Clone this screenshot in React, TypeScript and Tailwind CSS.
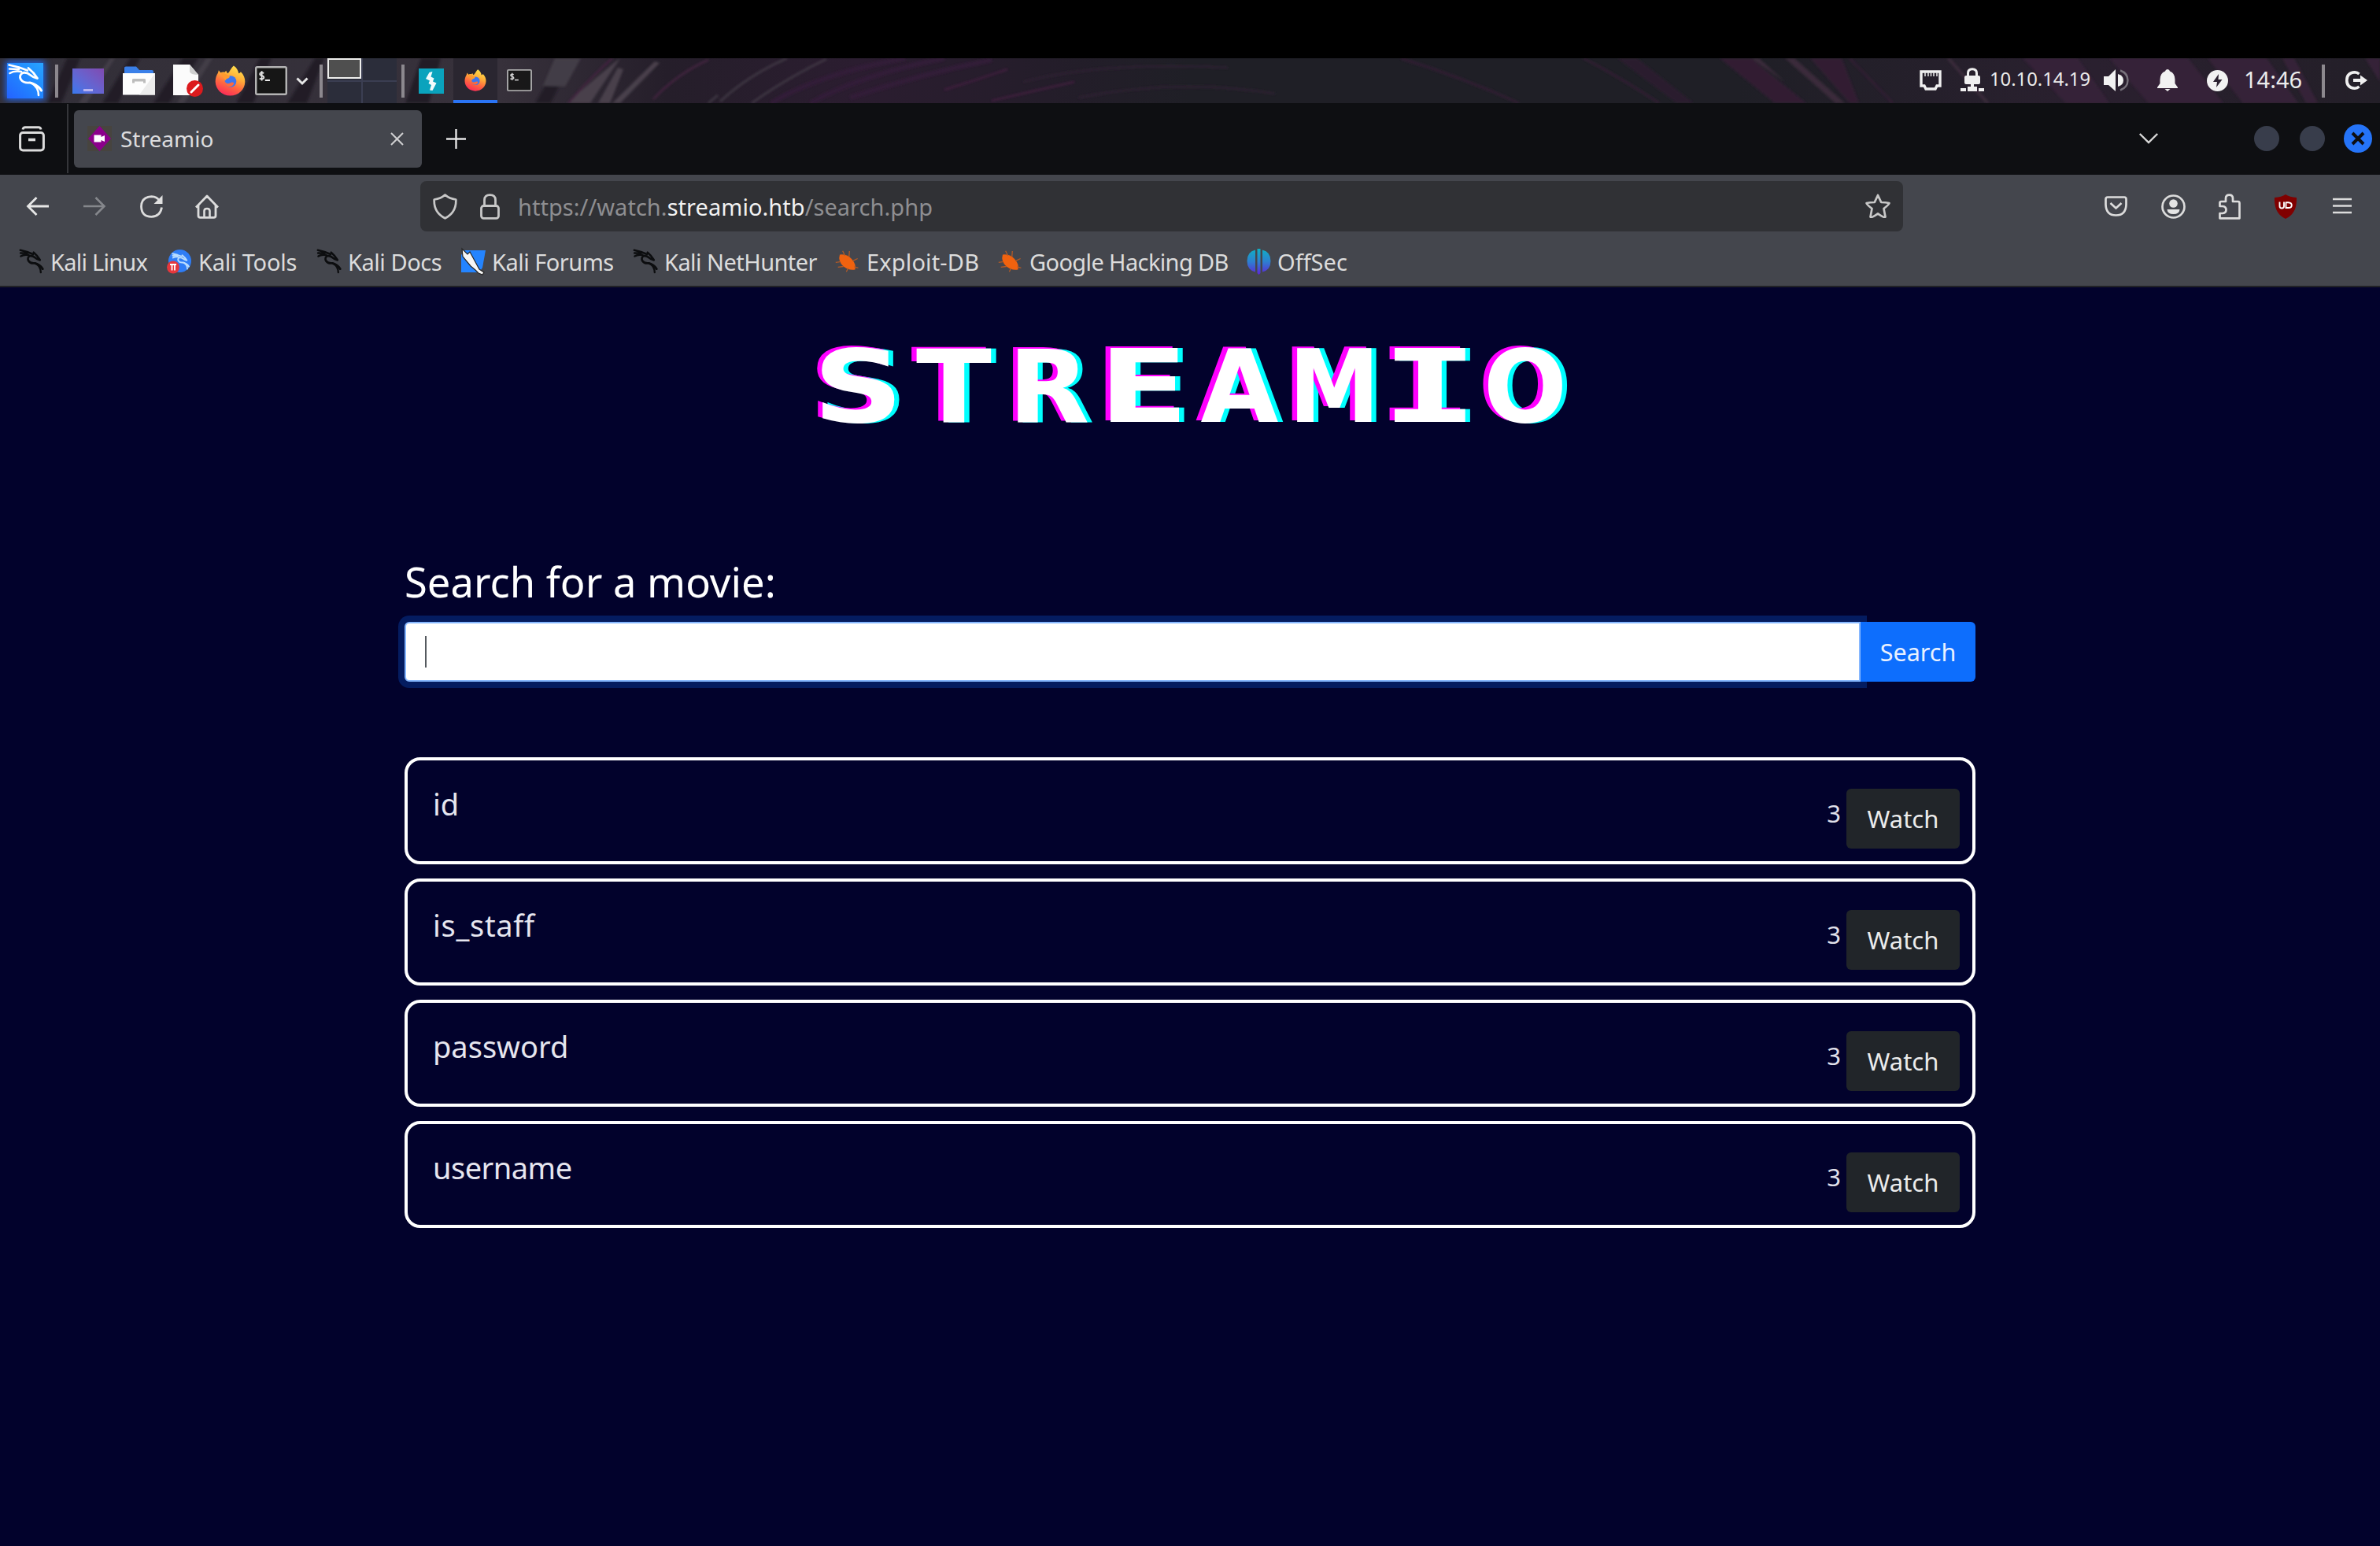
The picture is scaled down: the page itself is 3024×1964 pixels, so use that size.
import React from "react";

type SvgProps = { w: number; h: number; className?: string; children: React.ReactNode; vb?: string };

function Svg({ w, h, vb, className = "", children }: SvgProps) {
  return (
    <svg
      width={w}
      height={h}
      viewBox={vb ?? `0 0 ${w} ${h}`}
      fill="none"
      className={`block shrink-0 overflow-visible ${className}`}
      aria-hidden="true"
      preserveAspectRatio="none"
    >
      {children}
    </svg>
  );
}

function DragonStrokes({ color, width = 2.6 }: { color: string; width?: number }) {
  return (
    <g stroke={color} strokeWidth={width} strokeLinecap="round" strokeLinejoin="round" fill="none">
      <path d="M2.5 2.5 L15 5.5 L26 9.5 M3 7.5 L15 8 M3.5 13 Q9 9.5 18 11" />
      <path d="M27 6.5 Q34 12 38.5 19.5 Q33 18.5 29 15 Q25 11.5 20 12.5 Q14.5 15.5 17.5 21 Q21 26 29 25 Q38 27 43.5 35" strokeWidth={width * 1.1} />
      <path d="M31 25.5 Q40 31 40 41 M36 28 Q42 31 43.5 35" />
    </g>
  );
}

function Firefox({ size, id }: { size: number; id: string }) {
  return (
    <Svg w={size} h={size} vb="0 0 40 40">
      <defs>
        <linearGradient id={id} x1="30" y1="2" x2="14" y2="40" gradientUnits="userSpaceOnUse">
          <stop offset="0" stopColor="#ffe14d" />
          <stop offset="0.35" stopColor="#ffae38" />
          <stop offset="0.65" stopColor="#ff6640" />
          <stop offset="1" stopColor="#fb2859" />
        </linearGradient>
      </defs>
      <path
        d="M24.5 0.5 C28.5 3 30.5 7 31 10.5 C33 10 33.8 8.4 33.8 8.4 C37.5 12 39.5 16.5 39.3 21.5 C39 32 30.5 39.5 20 39.5 C9.5 39.5 1 31.5 0.7 21.5 C0.6 17 2 13 4 10 L5 6.5 L7.5 9.5 C9 8.5 11 8.5 13 9 L14.5 7 L16.5 10.5 C19.5 9 20 4.5 24.5 0.5Z"
        fill={`url(#${id})`}
      />
      <circle cx="20.5" cy="21" r="7.5" fill="#3d76ee" />
      <path d="M8 10 C13 10 16 12 19.5 14.5 C18.5 17.8 14 16.5 14 20 C12.5 17 9 15 8 10Z" fill="#ff9a2e" />
      <path d="M13 20 C14 25 18.5 24 21 22.5 C23.5 21 25.5 23 24.5 24.5 C20 31 12 27 13 20Z" fill="#ff6a3c" />
    </Svg>
  );
}

function Terminal({ w, h }: { w: number; h: number }) {
  return (
    <Svg w={w} h={h} vb="0 0 40 36">
      <rect x="1.2" y="1.2" width="37.6" height="33.6" rx="1.5" fill="#161616" stroke="#b4b4b4" strokeWidth="2.4" />
      <path d="M11 8.5 Q6 7.3 6 9.8 Q6 11.3 8.5 11.8 Q11 12.5 11 14 Q11 16.5 5.5 15.4 M8.4 6 V18" stroke="#e8e8e8" strokeWidth="1.8" />
      <path d="M12.5 17.5 H18.5" stroke="#e8e8e8" strokeWidth="2" />
    </Svg>
  );
}

function Wallpaper() {
  return (
    <svg className="absolute inset-0 size-full" viewBox="0 0 3024 57" preserveAspectRatio="none" aria-hidden="true">
      <defs>
        <linearGradient id="wall" x1="0" x2="1">
          <stop offset="0" stopColor="#322f38" />
          <stop offset="0.21" stopColor="#37313b" />
          <stop offset="0.28" stopColor="#251e2a" />
          <stop offset="0.36" stopColor="#2b1d30" />
          <stop offset="0.44" stopColor="#241d2a" />
          <stop offset="0.5" stopColor="#1f1f26" />
          <stop offset="0.73" stopColor="#1f1f26" />
          <stop offset="0.88" stopColor="#2a202f" />
          <stop offset="1" stopColor="#231f28" />
        </linearGradient>
        <filter id="soft" x="-5%" y="-20%" width="110%" height="140%">
          <feGaussianBlur stdDeviation="1.5" />
        </filter>
      </defs>
      <rect width="3024" height="57" fill="url(#wall)" />
      <g filter="url(#soft)">
        <g fill="#211f28">
          <path d="M60 57 L85 0 H102 L78 57Z M130 57 L165 0 H178 L150 57Z M195 57 L232 0 H252 L215 57Z M300 57 L330 0 H345 L322 57Z M365 57 L400 0 H412 L390 57Z M515 57 L535 0 H560 L545 57Z M680 57 L712 0 H728 L700 57Z" />
        </g>
        <g fill="#433d47">
          <path d="M100 57 L140 0 H146 L110 57Z M225 57 L262 0 H270 L234 57Z M690 35 L705 0 H738 L718 36Z" />
          <path d="M720 57 L780 6 L788 0 L750 57Z M760 57 L785 12 L792 14 L775 57Z M778 57 L832 4 L838 6 L788 57Z" fill="#49414c" />
        </g>
        <g stroke="#3a1f39" strokeWidth="2.5" fill="none">
          <path d="M722 57 Q750 25 778 0 M830 52 Q860 20 900 2" stroke="#43233f" />
          <path d="M980 57 Q1040 20 1150 0 M1030 57 Q1090 22 1200 0 M1080 50 Q1170 20 1260 2" stroke="#331c37" strokeWidth="6" />
          <path d="M1200 40 Q1240 28 1280 14 M1260 54 Q1320 40 1365 30" stroke="#401f3e" />
          <path d="M1300 30 Q1400 4 1560 12 M1370 50 Q1500 25 1620 45" stroke="#2d2032" />
        </g>
        <g stroke="#3f3844" strokeWidth="2.5" fill="none">
          <path d="M915 55 Q950 22 1000 0 M955 57 Q1000 25 1050 1 M900 57 L912 47" />
        </g>
        <g stroke="#301f33" strokeWidth="3" fill="none">
          <path d="M1780 0 Q1860 25 1930 57 M2012 0 Q2060 25 2108 57 M2350 0 L2405 57" />
        </g>
        <g fill="#291f2e">
          <path d="M2055 0 H2080 L2152 57 H2130Z" />
          <path d="M2185 0 H2225 L2295 57 H2255Z M2300 0 H2340 L2362 57 H2350Z" fill="#301f33" />
          <path d="M2570 0 H2640 L2680 57 H2625Z M2680 0 H2780 L2825 57 H2730Z M2805 0 H2880 L2920 57 H2850Z M2900 0 H2915 L2945 57 H2930Z M3005 0 H3024 V30Z" fill="#362037" />
        </g>
        <g fill="#3a2b3a">
          <path d="M2225 0 H2235 L2268 30Z M2268 0 H2280 L2344 57 H2332Z M2473 0 H2478 L2528 57 H2523Z" />
        </g>
      </g>
    </svg>
  );
}

function Sep() {
  return <div className="h-[42px] w-1 shrink-0 bg-[#8c888e]" />;
}

function Panel() {
  return (
    <div className="relative h-[57px] w-full overflow-hidden bg-[#1f1f26]">
      <Wallpaper />
      <div className="relative flex h-[57px] items-center">
        <div className="ml-[9px] flex h-[45px] w-[46px] items-center justify-center bg-linear-to-tr from-[#2562ff] to-[#28a4ff] shadow-[0_0_8px_2px_#2065e8]">
          <Svg w={46} h={45} vb="0 0 46 45">
            <DragonStrokes color="#ffffff" />
          </Svg>
        </div>
        <div className="ml-[15px]"><Sep /></div>
        <div className="ml-[18px] flex h-8 w-10 items-end justify-center bg-linear-to-tr from-[#3579ee] to-[#8049b0] pb-[3px]">
          <div className="h-[3px] w-3 bg-[#b9b3ef]" />
        </div>
        <Svg w={41} h={37} className="ml-6">
          <path d="M2 2 Q2 0.5 4 0.5 H17 L21 5 H37 Q39 5 39 7 V12 H2Z" fill="#3a7fe8" />
          <path d="M0 9 H41 V36.5 H0Z" fill="#fdfdfd" />
          <path d="M41 9 V36.5 H21Z" fill="#ececec" />
          <path d="M12 21.5 V17 Q12 16 14 16 H27 Q29 16 29 17 V21.5 H26 V19.5 H15 V21.5Z" fill="#bdbdbd" />
        </Svg>
        <Svg w={38} h={41} className="ml-[23px]">
          <path d="M0 0 H21 L32 13 V39 H0Z" fill="#fbfbfb" />
          <path d="M21 0 V9 Q22 13 32 13Z" fill="#cfcfcf" />
          <circle cx="27.5" cy="30.5" r="10.5" fill="#dc1a1d" />
          <path d="M23 35 L32 26" stroke="#fff" strokeWidth="3" strokeLinecap="round" />
        </Svg>
        <div className="ml-[15px]"><Firefox size={39} id="ff-launch" /></div>
        <div className="ml-3"><Terminal w={41} h={37} /></div>
        <Svg w={16} h={10} className="ml-[11px]">
          <path d="M1.5 1.5 L8 8 L14.5 1.5" stroke="#e6e6e6" strokeWidth="3" />
        </Svg>
        <div className="ml-[14px]"><Sep /></div>
        <div className="ml-[6px] grid h-[57px] w-[88px] grid-cols-2 grid-rows-2 gap-[2px] bg-[#3b3e52]">
          <div className="bg-[#2b2d3a]">
            <div className="h-[26px] border-2 border-[#eeeeec] bg-[#4f4f4f]" />
          </div>
          <div className="bg-[#2b2d3a]" />
          <div className="bg-[#2b2d3a]" />
          <div className="bg-[#2b2d3a]" />
        </div>
        <div className="ml-[6px]"><Sep /></div>
        <Svg w={32} h={32} className="ml-[18px]">
          <rect width="32" height="32" fill="#0aa3bd" />
          <path d="M17.5 4 L13.5 5 L9 13 L14 15.5 L12.5 19 L16 21 L14 27.5 L17.5 28 L22.5 18.5 L18 16.5 L19.5 12.5 L15.5 10.5Z" fill="#f2fbfc" />
        </Svg>
        <div className="ml-3 flex h-[57px] w-14 flex-col items-center border-b-4 border-[#2a74f5] bg-[#2a2630] pt-[14px]">
          <Firefox size={28} id="ff-task" />
        </div>
        <div className="-mt-[2px] ml-3 opacity-90"><Terminal w={32} h={28} /></div>

        <Svg w={28} h={26} className="-mt-[2px] ml-[1763px]">
          <path d="M2 2 H26 V20 H22 L20 24 H8 L6 20 H2Z" stroke="#f0f0f0" strokeWidth="3.4" />
          <path d="M7 3 V8 M11 3 V8 M14.5 3 V8 M18 3 V8 M22 3 V8" stroke="#e0e0e0" strokeWidth="1.6" />
        </Svg>
        <Svg w={30} h={31} className="-mt-[2px] ml-6">
          <path d="M9.5 11 V7 Q9.5 1.8 15 1.8 Q20.5 1.8 20.5 7 V11" stroke="#f0f0f0" strokeWidth="3" />
          <path d="M7 10 H23 Q25 10 25 12 V19 Q25 21 23 21 H7 Q5 21 5 19 V12 Q5 10 7 10Z M13 21 H17 V24 H21 V30 H9 V24 H13Z M0 26 H7 V30 H0Z M23 26 H30 V30 H23Z" fill="#f0f0f0" />
        </Svg>
        <span className="-mt-[4px] ml-[7px] w-[130px] text-[23.8px] leading-none whitespace-nowrap text-[#ececec]">10.10.14.19</span>
        <Svg w={32} h={28} className="-mt-[2px] ml-[15px]">
          <path d="M0 9 H6 L15 0 V28 L6 20 H0Z" fill="#f2f2f2" />
          <path d="M18 6 Q25 8 25 14 Q25 20 18 22Z" fill="#f2f2f2" />
          <path d="M21 1.5 Q30.5 5 30.5 14 Q30.5 23 21 26.5" stroke="#77717b" strokeWidth="2.4" />
        </Svg>
        <Svg w={26} h={28} className="-mt-[2px] ml-9">
          <path d="M13 0 Q15.5 0 16 2.5 Q22.5 5 22.5 13 V18 L26 23 V24 H0 V23 L3.5 18 V13 Q3.5 5 10 2.5 Q10.5 0 13 0Z M9.5 25 H16.5 L13 28Z" fill="#f2f2f2" />
        </Svg>
        <Svg w={27} h={27} className="-mt-[1px] ml-[37px]">
          <circle cx="13.5" cy="13.5" r="13.5" fill="#f2f2f2" />
          <path d="M15 5 L8 15 H13 L12 22 L19.5 12 H14.5Z" fill="#2b2130" />
        </Svg>
        <span className="-mt-[4px] ml-[20px] w-[75px] text-[29px] leading-none whitespace-nowrap text-[#ececec]">14:46</span>
        <div className="ml-6"><Sep /></div>
        <Svg w={28} h={24} className="-mt-[1px] ml-[26px]">
          <path d="M17.5 4 Q15 1.8 12 1.8 Q1.8 2.5 1.8 12 Q1.8 21.5 12 22.2 Q15 22.2 17.5 20" stroke="#f0f0f0" strokeWidth="3.6" />
          <path d="M10 10 H19 V5.5 L28 12 L19 18.5 V14 H10Z" fill="#f0f0f0" />
        </Svg>
      </div>
    </div>
  );
}

function TabBar() {
  return (
    <div className="flex h-[91px] items-center bg-[#0e0f12] pb-px">
      <Svg w={33} h={33} className="mt-[1px] ml-6">
        <path d="M5 4.5 Q5.5 1.8 8 1.8 H25 Q27.5 1.8 28 4.5" stroke="#dcdcdc" strokeWidth="3" />
        <rect x="1.6" y="8.5" width="29.8" height="22.5" rx="3.5" stroke="#dcdcdc" strokeWidth="3" />
        <path d="M12 17.5 H21" stroke="#dcdcdc" strokeWidth="3.6" />
      </Svg>
      <div className="ml-7 h-[88px] w-[2px] bg-[#35363a]" />
      <div className="ml-[7px] flex h-[73px] w-[442px] items-center rounded-md bg-[#44464d]">
        <Svg w={31} h={32} className="ml-[17px]">
          <rect width="31" height="32" fill="#47443f" />
          <path d="M15.5 0 L30 16 L15.5 32 L1 16Z" fill="#8b008b" />
          <path d="M8.5 11.5 H17.5 V14 L22 12 V20 L17.5 18 V20.5 H8.5Z" fill="#fff" />
        </Svg>
        <span className="ml-[11px] w-[343px] text-[28px] leading-none whitespace-nowrap text-[#dcdcde]">Streamio</span>
        <Svg w={17} h={17}>
          <path d="M1 1 L16 16 M16 1 L1 16" stroke="#d0d0d2" strokeWidth="2" />
        </Svg>
      </div>
      <Svg w={25} h={25} className="ml-[31px]">
        <path d="M12.5 0 V25 M0 12.5 H25" stroke="#e4e4e4" strokeWidth="2.4" />
      </Svg>
      <Svg w={24} h={14} className="mr-[122px] ml-auto">
        <path d="M0.8 1 L12 12 L23.2 1" stroke="#d8d8d8" strokeWidth="2.4" />
      </Svg>
      <div className="mr-[26px] size-8 rounded-full bg-[#383d4b]" />
      <div className="mr-6 size-8 rounded-full bg-[#383d4b]" />
      <div className="mr-[10px] flex size-9 items-center justify-center rounded-full bg-[#2574f8]">
        <Svg w={16} h={16}>
          <path d="M1 1 L15 15 M15 1 L1 15" stroke="#0e0f12" strokeWidth="4" />
        </Svg>
      </div>
    </div>
  );
}

function NavBar() {
  return (
    <div className="flex h-[80px] items-center">
      <Svg w={28} h={24} className="ml-[34px]">
        <path d="M28 12 H1.5 M12.5 1 L1.5 12 L12.5 23" stroke="#e6e6e6" strokeWidth="2.8" />
      </Svg>
      <Svg w={28} h={24} className="ml-11">
        <path d="M0 12 H26.5 M15.5 1 L26.5 12 L15.5 23" stroke="#85878c" strokeWidth="2.6" />
      </Svg>
      <Svg w={29} h={29} className="ml-11">
        <path d="M25.5 8 Q21.5 1.6 14.5 1.6 Q1.5 2.5 1.5 14.5 Q2 27.4 14.5 27.4 Q25.5 27 27.5 15.5" stroke="#dcdcdc" strokeWidth="2.8" />
        <path d="M28.5 0 V11 H17.5Z" fill="#e0e0e0" />
      </Svg>
      <Svg w={30} h={31} className="ml-[41px]">
        <path d="M1 16.5 L15 2 L29 16.5 M4 14 V27 Q4 29.4 6.5 29.4 H23.5 Q26 29.4 26 27 V14" stroke="#dcdcdc" strokeWidth="2.8" strokeLinejoin="round" />
        <path d="M11.5 29 V21 Q11.5 18 15 18 Q18.5 18 18.5 21 V29" stroke="#dcdcdc" strokeWidth="2.6" />
      </Svg>
      <div className="ml-64 flex h-16 w-[1884px] items-center rounded-lg bg-[#303135]">
        <Svg w={31} h={33} className="ml-4">
          <path d="M15.5 1.6 Q21 6.5 29.3 7.5 Q30 24 15.5 31.3 Q1 24 1.7 7.5 Q10 6.5 15.5 1.6Z" stroke="#c8c8c8" strokeWidth="2.7" strokeLinejoin="round" />
        </Svg>
        <Svg w={25} h={33} className="ml-[29px]">
          <path d="M5.5 15 V8 Q5.5 1.6 12.5 1.6 Q19.5 1.6 19.5 8 V15" stroke="#c8c8c8" strokeWidth="2.8" />
          <rect x="1.5" y="15.5" width="22" height="15.8" rx="3" stroke="#c8c8c8" strokeWidth="2.8" />
        </Svg>
        <span className="ml-[23px] text-[29px] leading-none tracking-[0.04px] whitespace-nowrap text-[#8e8e91]">
          https://watch.<span className="text-[#f2f2f2]">streamio.htb</span>/search.php
        </span>
        <Svg w={32} h={32} className="mr-4 ml-auto">
          <path d="M16 2 L20.2 11 Q26 11.2 30.5 12 Q30.5 13.5 23.5 19 L25.5 29.5 Q24 31 16 25.3 Q8 31 6.5 29.5 L8.5 19 Q1.5 13.5 1.5 12 Q6 11.2 11.8 11Z" stroke="#c8c8c8" strokeWidth="2.7" strokeLinejoin="round" />
        </Svg>
      </div>
      <Svg w={29} h={26} className="ml-64">
        <path d="M4 1.5 H25 Q27.5 1.5 27.5 4 V11 Q27 24.5 14.5 24.5 Q2 24.5 1.5 11 V4 Q1.5 1.5 4 1.5Z" stroke="#dcdcdc" strokeWidth="2.7" />
        <path d="M7.5 9 L14.5 15.5 L21.5 9" stroke="#dcdcdc" strokeWidth="2.7" />
      </Svg>
      <Svg w={31} h={31} className="ml-[43px]">
        <circle cx="15.5" cy="15.5" r="14" stroke="#dcdcdc" strokeWidth="2.7" />
        <circle cx="15.5" cy="11.5" r="5.3" fill="#e4e4e4" />
        <path d="M7.5 19 H23.5 Q23 25 15.5 25 Q8 25 7.5 19Z" fill="#e4e4e4" />
      </Svg>
      <Svg w={28} h={33} className="ml-[42px]">
        <path d="M1.5 14 V11.5 Q1.5 10 3.5 10 H9 V6 Q9 1.6 13.5 1.6 Q18 1.6 18 6 V10 H24.5 Q26.5 10 26.5 12 V31.3 H1.5 V25 H5 Q9.5 24.5 9.5 20.5 Q9.5 16.5 5 16 H1.5Z" stroke="#dcdcdc" strokeWidth="2.7" strokeLinejoin="round" />
      </Svg>
      <Svg w={28} h={31} className="ml-[43px]">
        <path d="M14 0 Q19 3.5 28 4 Q29 24 14 31 Q-1 24 0 4 Q9 3.5 14 0Z" fill="#800000" />
        <path d="M6.5 9.5 V15 Q6.5 17.5 9.3 17.5 Q12 17.5 12 15 V9.5 M14.5 18 V9.5 M14.5 10.2 H17.5 Q21.8 10.5 21.8 13.7 Q21.8 17 17.5 17 H14.5" stroke="#fff" strokeWidth="1.9" />
      </Svg>
      <Svg w={24} h={22} className="ml-[46px]">
        <path d="M0 2 H24 M0 10.5 H24 M0 19 H24" stroke="#dcdcdc" strokeWidth="2.7" />
      </Svg>
    </div>
  );
}

function KaliDark() {
  return (
    <Svg w={32} h={33} vb="0 0 46 45">
      <DragonStrokes color="#0c0d0f" width={3.4} />
    </Svg>
  );
}

function KaliTools() {
  return (
    <Svg w={32} h={33}>
      <circle cx="16.5" cy="15.5" r="14.5" fill="#2f7df6" />
      <g transform="translate(6 5) scale(0.5)">
        <DragonStrokes color="#b9dcff" width={3.6} />
      </g>
      <circle cx="8" cy="23.5" r="8" fill="#e5373c" />
      <path d="M4 20 H12 M6.5 20 V27.5 M10 20 V27.5" stroke="#fff" strokeWidth="1.8" />
    </Svg>
  );
}

function KaliForums() {
  return (
    <Svg w={32} h={33}>
      <path d="M5 2 H32 L28 24 L24 30 H1 V8Z" fill="#2484ff" />
      <path d="M2 0 L9 7 L12 4 L18 15 L24 26 L30 30 L28 33 L23 31 L19 27 L13 22 L3 10Z" fill="#f6f6f6" stroke="#262626" strokeWidth="1.2" />
    </Svg>
  );
}

function ExploitBug() {
  return (
    <Svg w={32} h={33}>
      <g transform="rotate(38 15 17)">
        <path d="M2 15 Q8 9 17 10 Q27 12 29 18 Q24 24 15 24 Q5 23 2 15Z" fill="#f0620f" />
        <path d="M8 12 L2 9 M13 10 L9 4 M20 11 L23 5 M8 22 L4 26 M15 24 L10 29 M21 22 L22 27 M26 16 L31 14" stroke="#b35a26" strokeWidth="1.3" />
      </g>
    </Svg>
  );
}

function OffSecMark() {
  return (
    <Svg w={31} h={33}>
      <defs>
        <linearGradient id="offsec" x1="0" y1="0" x2="0" y2="1">
          <stop offset="0" stopColor="#0fb0c4" />
          <stop offset="0.5" stopColor="#2e7fd0" />
          <stop offset="1" stopColor="#5c25d8" />
        </linearGradient>
      </defs>
      <path d="M11 1.5 V29.5 Q0.5 27 0.5 15.5 Q0.5 4 11 1.5Z M20 1.5 V29.5 Q30.5 27 30.5 15.5 Q30.5 4 20 1.5Z M13.5 0 H17.5 V31 L15.5 33 L13.5 31Z" fill="url(#offsec)" />
    </Svg>
  );
}

const bookmarks: { label: string; icon: React.ReactNode; cls: string }[] = [
  { label: "Kali Linux", icon: <KaliDark />, cls: "w-[188px] tracking-[-0.75px]" },
  { label: "Kali Tools", icon: <KaliTools />, cls: "w-[190px] tracking-[-0.2px]" },
  { label: "Kali Docs", icon: <KaliDark />, cls: "w-[183px] tracking-[-0.45px]" },
  { label: "Kali Forums", icon: <KaliForums />, cls: "w-[219px] tracking-[-0.5px]" },
  { label: "Kali NetHunter", icon: <KaliDark />, cls: "w-[257px] tracking-[-0.55px]" },
  { label: "Exploit-DB", icon: <ExploitBug />, cls: "w-[207px] tracking-[0.15px]" },
  { label: "Google Hacking DB", icon: <ExploitBug />, cls: "w-[316px] tracking-[-0.62px]" },
  { label: "OffSec", icon: <OffSecMark />, cls: "w-[140px] tracking-[0px]" },
];

function Bookmarks() {
  return (
    <div className="flex h-[61px] items-center pb-px pl-6">
      {bookmarks.map((b) => (
        <div key={b.label} className={`flex shrink-0 items-center gap-2 ${b.cls}`}>
          {b.icon}
          <span className="text-[29px] leading-none whitespace-nowrap text-[#dcdcdc]">{b.label}</span>
        </div>
      ))}
    </div>
  );
}

const logo: [string, string][] = [
  ["S", "scale-x-[1.24] [text-shadow:-5px_-2px_0_#ff00ff,5px_0_0_#00ffff]"],
  ["T", "scale-x-[1.09] [text-shadow:-6px_-2px_0_#ff00ff,6px_0_0_#00ffff]"],
  ["R", "scale-x-[1.04] [text-shadow:-6px_-2px_0_#ff00ff,6px_0_0_#00ffff]"],
  ["E", "scale-x-[1.3] [text-shadow:-5px_-2px_0_#ff00ff,5px_0_0_#00ffff]"],
  ["A", "scale-x-[0.99] [text-shadow:-6.5px_-2px_0_#ff00ff,6.5px_0_0_#00ffff]"],
  ["M", "scale-x-[0.9] [text-shadow:-7px_-2px_0_#ff00ff,7px_0_0_#00ffff]"],
  ["I", "font-['DejaVu_Sans_Mono'] scale-x-[1.6] [text-shadow:-4px_-2px_0_#ff00ff,4px_0_0_#00ffff]"],
  ["O", "scale-x-[0.97] [text-shadow:-6.5px_-2px_0_#ff00ff,6.5px_0_0_#00ffff]"],
];

function Logo() {
  return (
    <h1 className="ml-[1030px] grid h-[94px] w-[968px] grid-cols-8 place-items-center font-['DejaVu_Sans',sans-serif] text-[129px] leading-[94px] font-bold text-white">
      {logo.map(([ch, cls]) => (
        <span key={ch} className={cls}>{ch}</span>
      ))}
    </h1>
  );
}

const columns: [string, string][] = [
  ["id", "tracking-normal"],
  ["is_staff", "tracking-[0.7px]"],
  ["password", "tracking-normal"],
  ["username", "tracking-[-0.5px]"],
];

function Page() {
  return (
    <main className="flex flex-1 flex-col bg-[#02022c] pt-[79px]">
      <Logo />
      <div className="ml-[514px] w-[1996px]">
        <h2 className="mt-[165px] text-[52.5px] leading-[72px] text-white">Search for a movie:</h2>
        <div className="mt-[15px] flex h-[76px]">
          <div className="flex flex-1 items-center rounded-l-md border-2 border-[#86b7fe] bg-white pl-[24px] shadow-[0_0_0_8px_#041c60]">
            <div className="h-10 w-[2px] bg-[#555a5f]" />
          </div>
          <button className="relative w-[146px] rounded-r-md bg-[#0d6efd] text-[30.5px] leading-none text-[#e9f1ff]">Search</button>
        </div>
        <div className="mt-24 flex flex-col gap-[18px]">
          {columns.map(([name, cls]) => (
            <div key={name} className="flex h-[136px] justify-between rounded-[20px] border-4 border-white pr-4 pl-8">
              <span className={`mt-[30px] text-[38px] leading-[50px] text-[#e6e6ef] ${cls}`}>{name}</span>
              <div className="flex items-start">
                <span className="mt-[47px] mr-[7px] text-[31px] leading-10 text-[#e0e0ea]">3</span>
                <button className="mt-9 h-[76px] w-[144px] rounded-md bg-[#212529] text-[31px] leading-none text-[#ececec]">Watch</button>
              </div>
            </div>
          ))}
        </div>
      </div>
    </main>
  );
}

export default function App() {
  return (
    <div className="flex h-[1964px] w-[3024px] flex-col overflow-hidden bg-black pt-[74px] font-['Noto_Sans',sans-serif]">
      <Panel />
      <TabBar />
      <div className="h-[143px] border-b-2 border-[#202126] bg-[#44464d]">
        <NavBar />
        <Bookmarks />
      </div>
      <Page />
    </div>
  );
}
